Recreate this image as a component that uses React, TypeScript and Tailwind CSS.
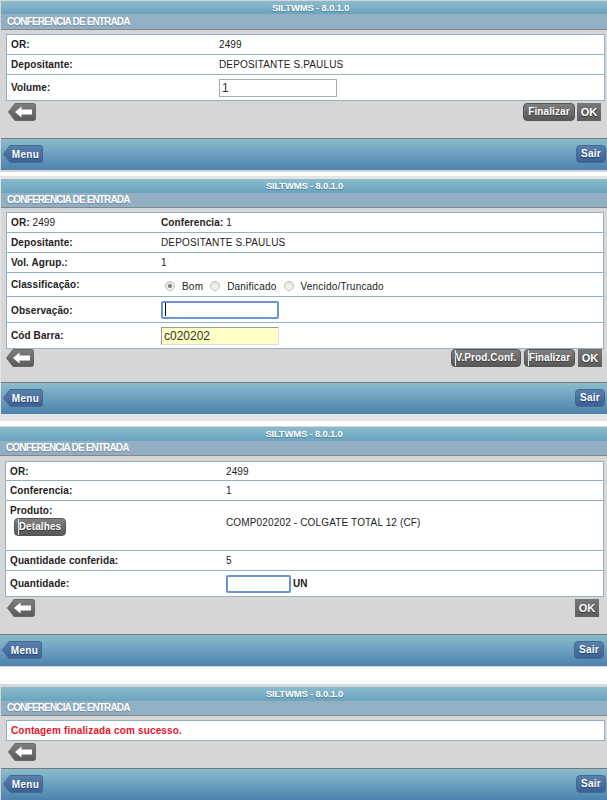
import React from "react";

const barCls = "bg-gradient-to-b from-[#8bbccd] to-[#6ba3be] flex items-center justify-center text-white font-bold text-[9.5px] tracking-[-0.2px] leading-none [text-shadow:0_1px_1px_#4b7d96]";
const titleCls = "bg-[#93afc3] border-b border-[#80888c] flex items-center text-white font-bold text-[10px] tracking-[-0.85px] leading-none [text-shadow:0_1px_1px_#6d8aa0]";
const footerCls = "h-[32px] shrink-0 border-t border-[#777] bg-gradient-to-b from-[#8bbccd] to-[#4c82ad] flex justify-between items-start pt-[6px]";
const rowCls = "flex items-center border-b last:border-b-0 border-[#8fb3c8] pl-[4px] text-[10px] tracking-[0.1px] text-[#222]";
const lblCls = "font-bold shrink-0 text-[#222]";

function Back() {
  return (
    <button className="block w-[28px] h-[18px] shrink-0">
      <svg width="28" height="18" viewBox="0 0 28 18">
        <defs>
          <linearGradient id="bk" x1="0" y1="0" x2="0" y2="1">
            <stop offset="0" stopColor="#808080" />
            <stop offset="1" stopColor="#5a5a5a" />
          </linearGradient>
        </defs>
        <path d="M0.5 9 L7 0.5 H25.5 Q27.5 0.5 27.5 2.5 V15.5 Q27.5 17.5 25.5 17.5 H7 Z" fill="url(#bk)" stroke="#666" />
        <path d="M7 9 L13.5 3.5 V6.5 H24 V11.5 H13.5 V14.5 Z" fill="#fff" />
      </svg>
    </button>
  );
}

function Menu() {
  return (
    <button className="relative block w-[40px] h-[18px] shrink-0 text-white font-bold text-[10px] tracking-[0.3px] pl-[5px] [text-shadow:0_1px_1px_#24406a]">
      <svg className="absolute inset-0" width="40" height="18" viewBox="0 0 40 18">
        <defs>
          <linearGradient id="mn" x1="0" y1="0" x2="0" y2="1">
            <stop offset="0" stopColor="#5a80ad" />
            <stop offset="1" stopColor="#3b6094" />
          </linearGradient>
        </defs>
        <path d="M0.5 9 L7 0.5 H37 Q39.5 0.5 39.5 3 V15 Q39.5 17.5 37 17.5 H7 Z" fill="url(#mn)" stroke="#46698f" />
      </svg>
      <span className="relative">Menu</span>
    </button>
  );
}

function Sair() {
  return (
    <button className="block w-[30px] h-[18px] shrink-0 rounded-[4px] border border-[#46698f] bg-gradient-to-b from-[#5a80ad] to-[#3b6094] text-white font-bold text-[10px] tracking-[0.3px] leading-none [text-shadow:0_1px_1px_#24406a]">
      Sair
    </button>
  );
}

function Gray({ label, className, line }: { label: string; className: string; line?: boolean }) {
  return (
    <button className={`relative block h-[18px] shrink-0 rounded-[4px] border border-[#555] bg-gradient-to-b from-[#808080] to-[#585858] text-white font-bold text-[10px] tracking-[0.1px] leading-none [text-shadow:0_1px_1px_#333] ${className}`}>
      {line && <span className="absolute left-[3px] top-0 bottom-0 w-px bg-[#e8e8e8]" />}
      <span className="relative">{label}</span>
    </button>
  );
}

function Ok({ className }: { className: string }) {
  return (
    <button className={`block w-[24px] h-[18px] shrink-0 bg-gradient-to-b from-[#777] to-[#5e5e5e] text-white font-bold text-[11px] leading-none [text-shadow:0_1px_1px_#333] ${className}`}>
      OK
    </button>
  );
}

function Radio({ checked }: { checked?: boolean }) {
  return (
    <span className="w-[10px] h-[10px] shrink-0 rounded-full border border-[#bbb] bg-gradient-to-b from-[#e4e4e4] to-[#f6f6f6] flex items-center justify-center">
      {checked && <span className="w-[4px] h-[4px] rounded-full bg-[#777]" />}
    </span>
  );
}

const inputBase = "h-[18px] text-[12px] leading-none tracking-[0px] text-[#333] px-[2px] flex items-center shrink-0";
const focusCls = "border-2 border-[#6a94d6] rounded-[2px] bg-white";

export default function App() {
  return (
    <div className="w-[607px] h-[800px] overflow-hidden bg-white font-['Liberation_Sans',Arial,sans-serif]">
      {/* Tela 1 */}
      <section className="bg-[#d6d6d6] pt-px pb-[2px] pl-px mb-[4px]">
        <div className={`h-[13px] pl-[13px] ${barCls}`}>SILTWMS - 8.0.1.0</div>
        <div className={`h-[16px] pl-[6px] ${titleCls}`}>CONFERENCIA DE ENTRADA</div>
        <div className="h-[108px] pt-[4px] pl-[5px] pr-[2px]">
          <div className="bg-white border border-[#8fb3c8]">
            <div className={`${rowCls} h-[20px]`}><span className={`${lblCls} w-[208px]`}>OR:</span><span>2499</span></div>
            <div className={`${rowCls} h-[20px]`}><span className={`${lblCls} w-[208px]`}>Depositante:</span><span className="tracking-[0.15px]">DEPOSITANTE S.PAULUS</span></div>
            <div className={`${rowCls} h-[25px]`}><span className={`${lblCls} w-[208px]`}>Volume:</span><div className={`${inputBase} w-[118px] border border-[#aaa] bg-white`}>1</div></div>
          </div>
          <div className="flex items-start mt-[2px] pl-[2px]">
            <Back />
            <div className="ml-auto flex gap-[2px] pr-[4px]">
              <Gray label="Finalizar" className="w-[52px]" />
              <Ok className="" />
            </div>
          </div>
        </div>
        <div className={footerCls}>
          <div className="pl-[2px]"><Menu /></div>
          <div className="pr-px"><Sair /></div>
        </div>
      </section>

      {/* Tela 2 */}
      <section className="bg-[#e4e4e4] pt-[3px] pb-[7px] pl-px mb-[5px]">
        <div className={`h-[14px] pl-px ${barCls}`}>SILTWMS - 8.0.1.0</div>
        <div className={`h-[15px] pl-[6px] ${titleCls}`}>CONFERENCIA DE ENTRADA</div>
        <div className="h-[174px] bg-[#d6d6d6] pt-[4px] pl-[5px] pr-[3px]">
          <div className="bg-white border border-[#8fb3c8]">
            <div className={`${rowCls} h-[20px]`}><span className="w-[150px] shrink-0"><b>OR:</b> <span>2499</span></span><span><b>Conferencia:</b> 1</span></div>
            <div className={`${rowCls} h-[20px]`}><span className={`${lblCls} w-[150px]`}>Depositante:</span><span className="tracking-[0.15px]">DEPOSITANTE S.PAULUS</span></div>
            <div className={`${rowCls} h-[20px]`}><span className={`${lblCls} w-[150px]`}>Vol. Agrup.:</span><span>1</span></div>
            <div className={`${rowCls} h-[24px]`}>
              <span className={`${lblCls} w-[154px] -mt-[1px]`}>Classificação:</span>
              <div className="flex items-center mt-[3px] tracking-[0.2px]">
                <Radio checked /><span className="ml-[7px]">Bom</span>
                <span className="ml-[7px]"><Radio /></span><span className="ml-[7px]">Danificado</span>
                <span className="ml-[8px]"><Radio /></span><span className="ml-[6px]">Vencido/Truncado</span>
              </div>
            </div>
            <div className={`${rowCls} h-[26px]`}><span className={`${lblCls} w-[150px] mt-px`}>Observação:</span><div className={`${inputBase} w-[118px] ${focusCls} px-0`}><span className="w-px h-[13px] bg-black" /></div></div>
            <div className={`${rowCls} h-[25px]`}><span className={`${lblCls} w-[150px]`}>Cód Barra:</span><div className={`${inputBase} w-[118px] bg-[#ffffc8] border border-[#ddd] border-t-[#999] border-l-[#999] px-0`}>c020202</div></div>
          </div>
          <div className="flex items-start">
            <Back />
            <div className="ml-auto flex pr-[2px]">
              <Gray label="V.Prod.Conf." className="w-[70px]" line />
              <Gray label="Finalizar" className="w-[51px] ml-[3px]" line />
              <Ok className="ml-[3px]" />
            </div>
          </div>
        </div>
        <div className={footerCls}>
          <div className="pl-[2px]"><Menu /></div>
          <div className="pr-[2px]"><Sair /></div>
        </div>
      </section>

      {/* Tela 3 */}
      <section className="bg-[#d6d6d6] pt-px pb-px mb-[17px]">
        <div className={`h-[14px] pl-px ${barCls}`}>SILTWMS - 8.0.1.0</div>
        <div className={`h-[15px] pl-[6px] ${titleCls}`}>CONFERENCIA DE ENTRADA</div>
        <div className="h-[178px] pt-[5px] pl-[5px] pr-[3px]">
          <div className="bg-white border border-[#8fb3c8]">
            <div className={`${rowCls} h-[19px]`}><span className={`${lblCls} w-[216px]`}>OR:</span><span>2499</span></div>
            <div className={`${rowCls} h-[20px]`}><span className={`${lblCls} w-[216px]`}>Conferencia:</span><span>1</span></div>
            <div className={`${rowCls} h-[50px] items-start`}>
              <div className="w-[216px] shrink-0 pt-[3px]">
                <div className={`${lblCls} leading-[13px]`}>Produto:</div>
                <Gray label="Detalhes" className="w-[52px] ml-[4px] mt-px" line />
              </div>
              <span className="tracking-[0.15px] mt-[14px]">COMP020202 - COLGATE TOTAL 12 (CF)</span>
            </div>
            <div className={`${rowCls} h-[20px]`}><span className={`${lblCls} w-[216px]`}>Quantidade conferida:</span><span>5</span></div>
            <div className={`${rowCls} h-[25px]`}><span className={`${lblCls} w-[216px]`}>Quantidade:</span><div className={`${inputBase} w-[65px] ${focusCls}`} /><b className="ml-[2px] tracking-normal">UN</b></div>
          </div>
          <div className="flex items-start mt-[2px] pl-[2px]">
            <Back />
            <div className="ml-auto pr-[5px]"><Ok className="" /></div>
          </div>
        </div>
        <div className={footerCls}>
          <div className="pl-[2px]"><Menu /></div>
          <div className="pr-[3px]"><Sair /></div>
        </div>
      </section>

      {/* Tela 4 */}
      <section className="bg-[#d6d6d6] pt-[3px] pl-px">
        <div className={`h-[14px] pl-px ${barCls}`}>SILTWMS - 8.0.1.0</div>
        <div className={`h-[15px] pl-[6px] ${titleCls}`}>CONFERENCIA DE ENTRADA</div>
        <div className="h-[52px] pt-[4px] pl-[5px] pr-[2px]">
          <div className="bg-white border border-[#8fb3c8] h-[21px] flex items-center pl-[4px] text-[10px] tracking-[0.15px] font-bold text-[#e8132b]">
            Contagem finalizada com sucesso.
          </div>
          <div className="pl-[2px] mt-[2px]"><Back /></div>
        </div>
        <div className={footerCls}>
          <div className="pl-[2px]"><Menu /></div>
          <div className="pr-px"><Sair /></div>
        </div>
      </section>
    </div>
  );
}
